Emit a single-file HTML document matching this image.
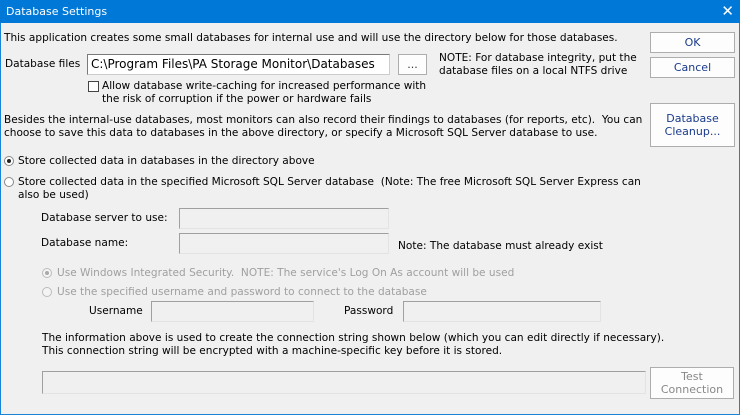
<!DOCTYPE html>
<html><head><meta charset="utf-8"><style>
*{margin:0;padding:0;box-sizing:border-box}
body{width:740px;height:415px;overflow:hidden;background:#f0f0f0;font-family:"DejaVu Sans","Liberation Sans",sans-serif;font-size:10.55px;color:#000;position:relative}
.win{position:absolute;left:0;top:0;width:740px;height:415px;border:1px solid #1883d7;border-top:none}
.title{position:absolute;left:0;top:0;width:740px;height:23px;background:#0078d7;color:#fff;font-size:11px;line-height:23px;padding-left:6px}
.x{position:absolute;right:6px;top:0;line-height:23px;font-size:15px;color:#fff}
.t{position:absolute;white-space:nowrap;line-height:13px}
.in{position:absolute;background:#fff;border:1px solid #7a7a7a;border-bottom-color:#ccc;border-right-color:#ccc}
.dis{background:#f0f0f0;border:1px solid #a0a0a0;border-bottom-color:#e3e3e3;border-right-color:#e3e3e3}
.btn{position:absolute;background:#fdfdfd;border:1px solid #adadad;color:#1a3a8a;text-align:center;display:flex;align-items:center;justify-content:center;line-height:13px;font-size:11px}
.g{color:#a0a0a0}
.rad{position:absolute;width:10px;height:10px;border-radius:50%;border:1px solid #888;background:#fff}
.rad.on::after{content:"";position:absolute;left:2px;top:2px;width:4px;height:4px;border-radius:50%;background:#222}
.rad.d{border-color:#bbb;background:#f4f4f4}
.rad.d.on::after{background:#aaa}
</style></head><body>
<div class="win"></div>
<div class="title">Database Settings<span class="x">✕</span></div>

<div class="t" style="left:4px;top:32px">This application creates some small databases for internal use and will use the directory below for those databases.</div>
<div class="t" style="left:5px;top:58px">Database files</div>
<div class="in" style="left:87px;top:54px;width:303px;height:21px"></div>
<div class="t" style="left:91px;top:57px;font-size:12px;line-height:15px">C:\Program Files\PA Storage Monitor\Databases</div>
<div class="btn" style="left:398px;top:54px;width:29px;height:21px;color:#333">...</div>
<div class="t" style="left:439px;top:52px">NOTE: For database integrity, put the<br>database files on a local NTFS drive</div>
<div class="btn" style="left:650px;top:32px;width:85px;height:21px">OK</div>
<div class="btn" style="left:650px;top:57px;width:85px;height:21px">Cancel</div>

<div style="position:absolute;left:88px;top:81px;width:11px;height:11px;border:1px solid #444;background:#fff"></div>
<div class="t" style="left:102px;top:80px">Allow database write-caching for increased performance with<br>the risk of corruption if the power or hardware fails</div>

<div class="t" style="left:4px;top:114px">Besides the internal-use databases, most monitors can also record their findings to databases (for reports, etc).&nbsp; You can<br>choose to save this data to databases in the above directory, or specify a Microsoft SQL Server database to use.</div>
<div class="btn" style="left:650px;top:103px;width:85px;height:44px">Database<br>Cleanup...</div>

<div class="rad on" style="left:4px;top:156px"></div>
<div class="t" style="left:18px;top:155px">Store collected data in databases in the directory above</div>
<div class="rad" style="left:4px;top:177px"></div>
<div class="t" style="left:18px;top:176px">Store collected data in the specified Microsoft SQL Server database&nbsp; (Note: The free Microsoft SQL Server Express can<br>also be used)</div>

<div class="t" style="left:41px;top:212px">Database server to use:</div>
<div class="in dis" style="left:179px;top:208px;width:210px;height:21px"></div>
<div class="t" style="left:41px;top:237px">Database name:</div>
<div class="in dis" style="left:179px;top:233px;width:210px;height:21px"></div>
<div class="t" style="left:398px;top:240px">Note: The database must already exist</div>

<div class="rad d on" style="left:42px;top:268px"></div>
<div class="t g" style="left:57px;top:267px">Use Windows Integrated Security.&nbsp; NOTE: The service's Log On As account will be used</div>
<div class="rad d" style="left:42px;top:287px"></div>
<div class="t g" style="left:57px;top:286px">Use the specified username and password to connect to the database</div>
<div class="t" style="left:89px;top:305px">Username</div>
<div class="in dis" style="left:151px;top:301px;width:163px;height:21px"></div>
<div class="t" style="left:344px;top:305px">Password</div>
<div class="in dis" style="left:403px;top:301px;width:198px;height:21px"></div>

<div class="t" style="left:42px;top:332px">The information above is used to create the connection string shown below (which you can edit directly if necessary).<br>This connection string will be encrypted with a machine-specific key before it is stored.</div>
<div class="in dis" style="left:42px;top:371px;width:604px;height:23px"></div>
<div class="btn" style="left:650px;top:367px;width:84px;height:32px;color:#888">Test<br>Connection</div>
</body></html>
